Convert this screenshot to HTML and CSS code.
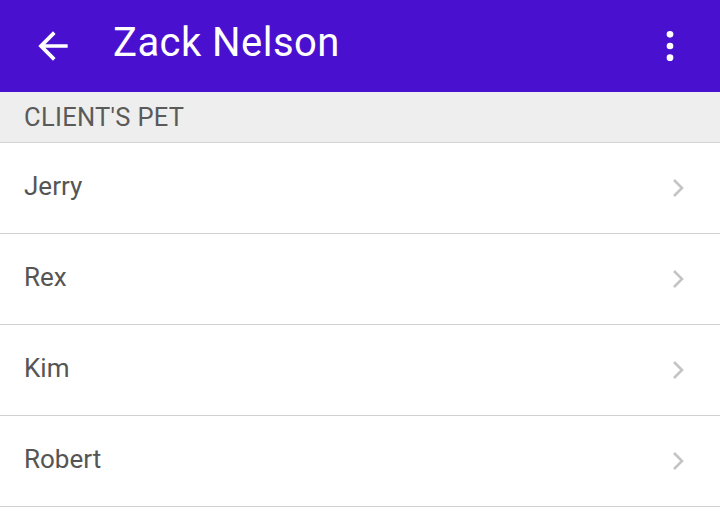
FILE: index.html
```html
<!DOCTYPE html>
<html>
<head>
<meta charset="utf-8">
<link rel="stylesheet" href="styles.css">
</head>
<body>
<div class="app">
  <header class="toolbar">
    <div class="back">
      <svg width="44" height="44" viewBox="0 0 24 24"><path fill="#fff" d="M20 11H7.83l5.59-5.59L12 4l-8 8 8 8 1.41-1.41L7.83 13H20v-2z"/></svg>
    </div>
    <div class="title">Zack Nelson</div>
    <div class="more">
      <svg width="40" height="40" viewBox="0 0 24 24"><circle cx="12" cy="5" r="2" fill="#fff"/><circle cx="12" cy="12" r="2" fill="#fff"/><circle cx="12" cy="19" r="2" fill="#fff"/></svg>
    </div>
  </header>
  <div class="section">CLIENT'S PET</div>
  <ul class="list">
    <li class="row"><span class="name">Jerry</span><svg class="chev" width="14" height="20" viewBox="0 0 14 20"><path d="M3 2l8 8-8 8" fill="none" stroke="#c4c4c4" stroke-width="2.6"/></svg></li>
    <li class="row"><span class="name">Rex</span><svg class="chev" width="14" height="20" viewBox="0 0 14 20"><path d="M3 2l8 8-8 8" fill="none" stroke="#c4c4c4" stroke-width="2.6"/></svg></li>
    <li class="row"><span class="name">Kim</span><svg class="chev" width="14" height="20" viewBox="0 0 14 20"><path d="M3 2l8 8-8 8" fill="none" stroke="#c4c4c4" stroke-width="2.6"/></svg></li>
    <li class="row"><span class="name">Robert</span><svg class="chev" width="14" height="20" viewBox="0 0 14 20"><path d="M3 2l8 8-8 8" fill="none" stroke="#c4c4c4" stroke-width="2.6"/></svg></li>
  </ul>
</div>
</body>
</html>
```
FILE: styles.css
```css
html, body {
  margin: 0;
  padding: 0;
  background: #ffffff;
  font-family: Roboto, "Liberation Sans", sans-serif;
}
.app {
  width: 720px;
}
.toolbar {
  height: 92px;
  background: #4a10d0;
  display: flex;
  align-items: center;
  color: #ffffff;
}
.back {
  width: 44px;
  height: 44px;
  margin-left: 31px;
  display: flex;
}
.title {
  margin-left: 38px;
  font-size: 40px;
  letter-spacing: 0.45px;
  flex: 1;
  padding-bottom: 8px;
}
.more {
  width: 40px;
  height: 40px;
  margin-right: 30px;
  display: flex;
}
.section {
  background: #eeeeee;
  border-bottom: 1px solid #d4d4d4;
  box-sizing: border-box;
  height: 51px;
  display: flex;
  align-items: center;
  padding-left: 24px;
  font-size: 25.5px;
  letter-spacing: 0.3px;
  color: #5a5a5a;
}
.list {
  list-style: none;
  margin: 0;
  padding: 0;
}
.row {
  height: 91px;
  box-sizing: border-box;
  border-bottom: 1px solid #d0d0d0;
  display: flex;
  align-items: center;
  padding-left: 24px;
  padding-right: 35px;
  justify-content: space-between;
}
.name {
  font-size: 26px;
  color: #555555;
  padding-bottom: 4px;
}
.chev {
  display: block;
}
```
